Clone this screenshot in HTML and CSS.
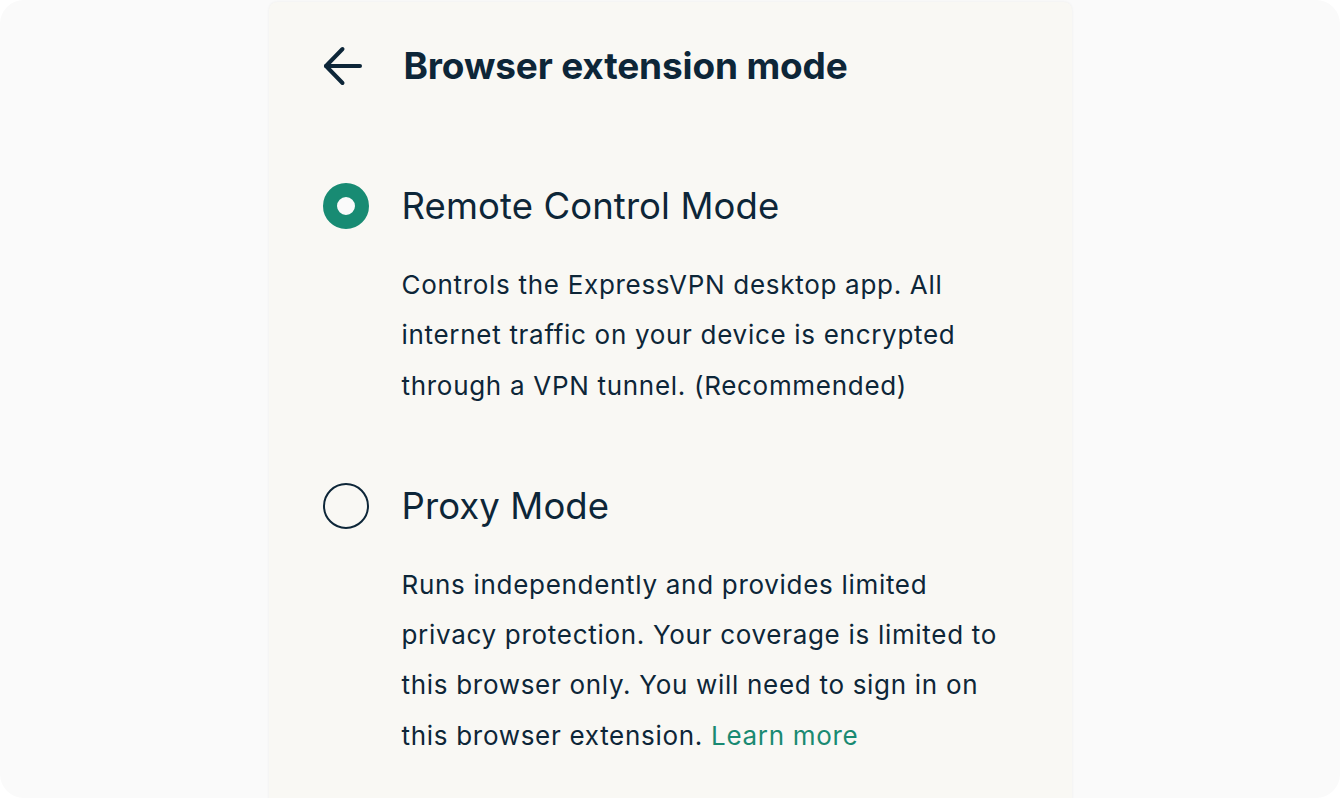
FILE: index.html
```html
<!DOCTYPE html>
<html lang="en">
<head>
<meta charset="utf-8">
<title>Browser extension mode</title>
<link rel="stylesheet" href="styles.css">
</head>
<body>
<div class="frame">
  <main class="card">
    <header class="header">
      <button class="back" aria-label="Back">
        <svg width="40" height="40" viewBox="0 0 40 40" fill="none" stroke="currentColor" stroke-width="4" stroke-linecap="round" stroke-linejoin="round">
          <path d="M37 20H3"/>
          <path d="M19.5 3L3 20l16.5 17"/>
        </svg>
      </button>
      <h1 class="title">Browser extension mode</h1>
    </header>

    <section class="option">
      <div class="option-row">
        <span class="radio radio-on"></span>
        <span class="option-title">Remote Control Mode</span>
      </div>
      <p class="option-desc">Controls the ExpressVPN desktop app. All internet traffic on your device is encrypted through a VPN tunnel. (Recommended)</p>
    </section>

    <section class="option">
      <div class="option-row">
        <span class="radio"></span>
        <span class="option-title">Proxy Mode</span>
      </div>
      <p class="option-desc">Runs independently and provides limited privacy protection. Your coverage is limited to this browser only. You will need to sign in on this browser extension. <a class="link" href="#">Learn more</a></p>
    </section>
  </main>
</div>
</body>
</html>
```

FILE: styles.css
```css
* { box-sizing: border-box; }

html, body {
  margin: 0;
  padding: 0;
  background: #ffffff;
}

body {
  font-family: Inter, "Noto Sans", sans-serif;
  color: #0d2638;
}

.frame {
  width: 1340px;
  height: 798px;
  border-radius: 24px;
  background: #fafafa;
  overflow: hidden;
  padding-top: 2px;
}

.card {
  width: 803px;
  margin: 0 auto;
  min-height: 820px;
  background: #f9f8f4;
  border-radius: 8px 8px 0 0;
  box-shadow: 0 0 3px rgba(0, 0, 0, 0.06);
  padding: 0 54px;
  display: flex;
  flex-direction: column;
}

.header {
  height: 128px;
  display: flex;
  align-items: center;
  gap: 41px;
}

.back {
  width: 40px;
  height: 40px;
  padding: 0;
  border: 0;
  background: none;
  color: #0d2638;
  display: flex;
  align-items: center;
  justify-content: flex-start;
}

.title {
  margin: 0;
  font-size: 37px;
  line-height: 44px;
  font-weight: 700;
  letter-spacing: -0.15px;
}

.option {
  display: flex;
  flex-direction: column;
  gap: 29px;
  margin-top: 51px;
}

.option + .option {
  margin-top: 70px;
}

.option-row {
  display: flex;
  align-items: center;
  gap: 33px;
  height: 50px;
}

.radio {
  width: 46px;
  height: 46px;
  border-radius: 50%;
  border: 2.5px solid #0d2638;
  flex: none;
}

.radio-on {
  border: 14px solid #188b73;
  background: #fafafa;
}

.option-title {
  font-size: 36.5px;
  line-height: 50px;
  font-weight: 400;
  letter-spacing: 0.1px;
}

.option-desc {
  margin: 0 0 0 79px;
  max-width: 605px;
  font-size: 26px;
  line-height: 50.3px;
  letter-spacing: 0.7px;
}

.link {
  color: #1a8a72;
  text-decoration: none;
}
```
